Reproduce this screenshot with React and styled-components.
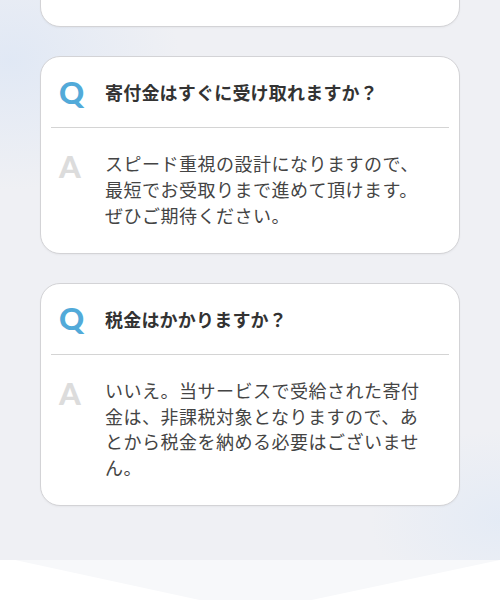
import React from "react";
import styled, { createGlobalStyle } from "styled-components";

const faqs = [
  {
    q: "受付はいつまでですか？",
    a: "通年で受け付けております。お気軽にお申し込みいただけますと、ありがとうございます。",
  },
  {
    q: "寄付金はすぐに受け取れますか？",
    a: "スピード重視の設計になりますので、最短でお受取りまで進めて頂けます。ぜひご期待ください。",
  },
  {
    q: "税金はかかりますか？",
    a: "いいえ。当サービスで受給された寄付金は、非課税対象となりますので、あとから税金を納める必要はございません。",
  },
];

const GlobalStyle = createGlobalStyle`
  html, body {
    margin: 0;
    padding: 0;
    background: #ffffff;
    overflow: hidden;
  }
  body {
    font-family: "Noto Sans CJK JP", "Noto Sans", sans-serif;
  }
`;

const App = () => {
  return (
    <>
      <GlobalStyle />
      <Page>
        <FaqSection>
          <FaqList>
            {faqs.map((item) => (
              <Card key={item.q}>
                <QuestionRow>
                  <Mark $type="q">Q</Mark>
                  <QuestionText>{item.q}</QuestionText>
                </QuestionRow>
                <Divider />
                <AnswerRow>
                  <Mark $type="a">A</Mark>
                  <AnswerText>{item.a}</AnswerText>
                </AnswerRow>
              </Card>
            ))}
          </FaqList>
        </FaqSection>
        <Footer>
          <Chevron />
        </Footer>
      </Page>
    </>
  );
};

const Page = styled.div`
  width: 500px;
  height: 600px;
  overflow: hidden;
  display: flex;
  flex-direction: column;
`;

const FaqSection = styled.section`
  height: 560px;
  flex-shrink: 0;
  overflow: hidden;
  background:
    radial-gradient(ellipse 170px 130px at 10px 60px, rgba(222, 231, 245, 0.85), transparent),
    radial-gradient(ellipse 130px 90px at 500px 520px, rgba(224, 233, 246, 0.7), transparent),
    #eff0f4;
`;

const FaqList = styled.div`
  display: flex;
  flex-direction: column;
  gap: 29px;
  padding: 0 40px;
  margin-top: -170px;
`;

const Card = styled.div`
  background: #ffffff;
  border: 1px solid #d3d3d6;
  border-radius: 20px;
  box-shadow: 0 1px 2px rgba(0, 0, 0, 0.04);
`;

const QuestionRow = styled.div`
  display: flex;
  align-items: center;
  height: 70px;
  padding: 0 18px;
  gap: 18px;
`;

const Mark = styled.span`
  width: 28px;
  flex-shrink: 0;
  font-family: "Lato", "Noto Sans", sans-serif;
  font-weight: 900;
  font-size: 31px;
  line-height: 1;
  color: ${(p) => (p.$type === "q" ? "#52aad9" : "#dcdcdc")};
`;

const QuestionText = styled.p`
  margin: 0;
  font-size: 18px;
  font-weight: 700;
  color: #333333;
  letter-spacing: 0.2px;
`;

const Divider = styled.hr`
  margin: 0 10px;
  border: none;
  border-top: 1px solid #d4d4d4;
`;

const AnswerRow = styled.div`
  display: flex;
  align-items: flex-start;
  gap: 18px;
  padding: 23px 36px 24px 18px;
`;

const AnswerText = styled.p`
  margin: 0;
  font-size: 18px;
  letter-spacing: 0.5px;
  line-height: 25.8px;
  color: #444444;
`;

const Footer = styled.div`
  flex: 1;
  background: #ffffff;
  position: relative;
  overflow: hidden;
`;

const Chevron = styled.div`
  position: absolute;
  left: 0;
  right: 0;
  top: 0;
  height: 52px;
  background: #f7f8fa;
  clip-path: polygon(3% 0, 100% 0, 51% 100%);
`;

export default App;
